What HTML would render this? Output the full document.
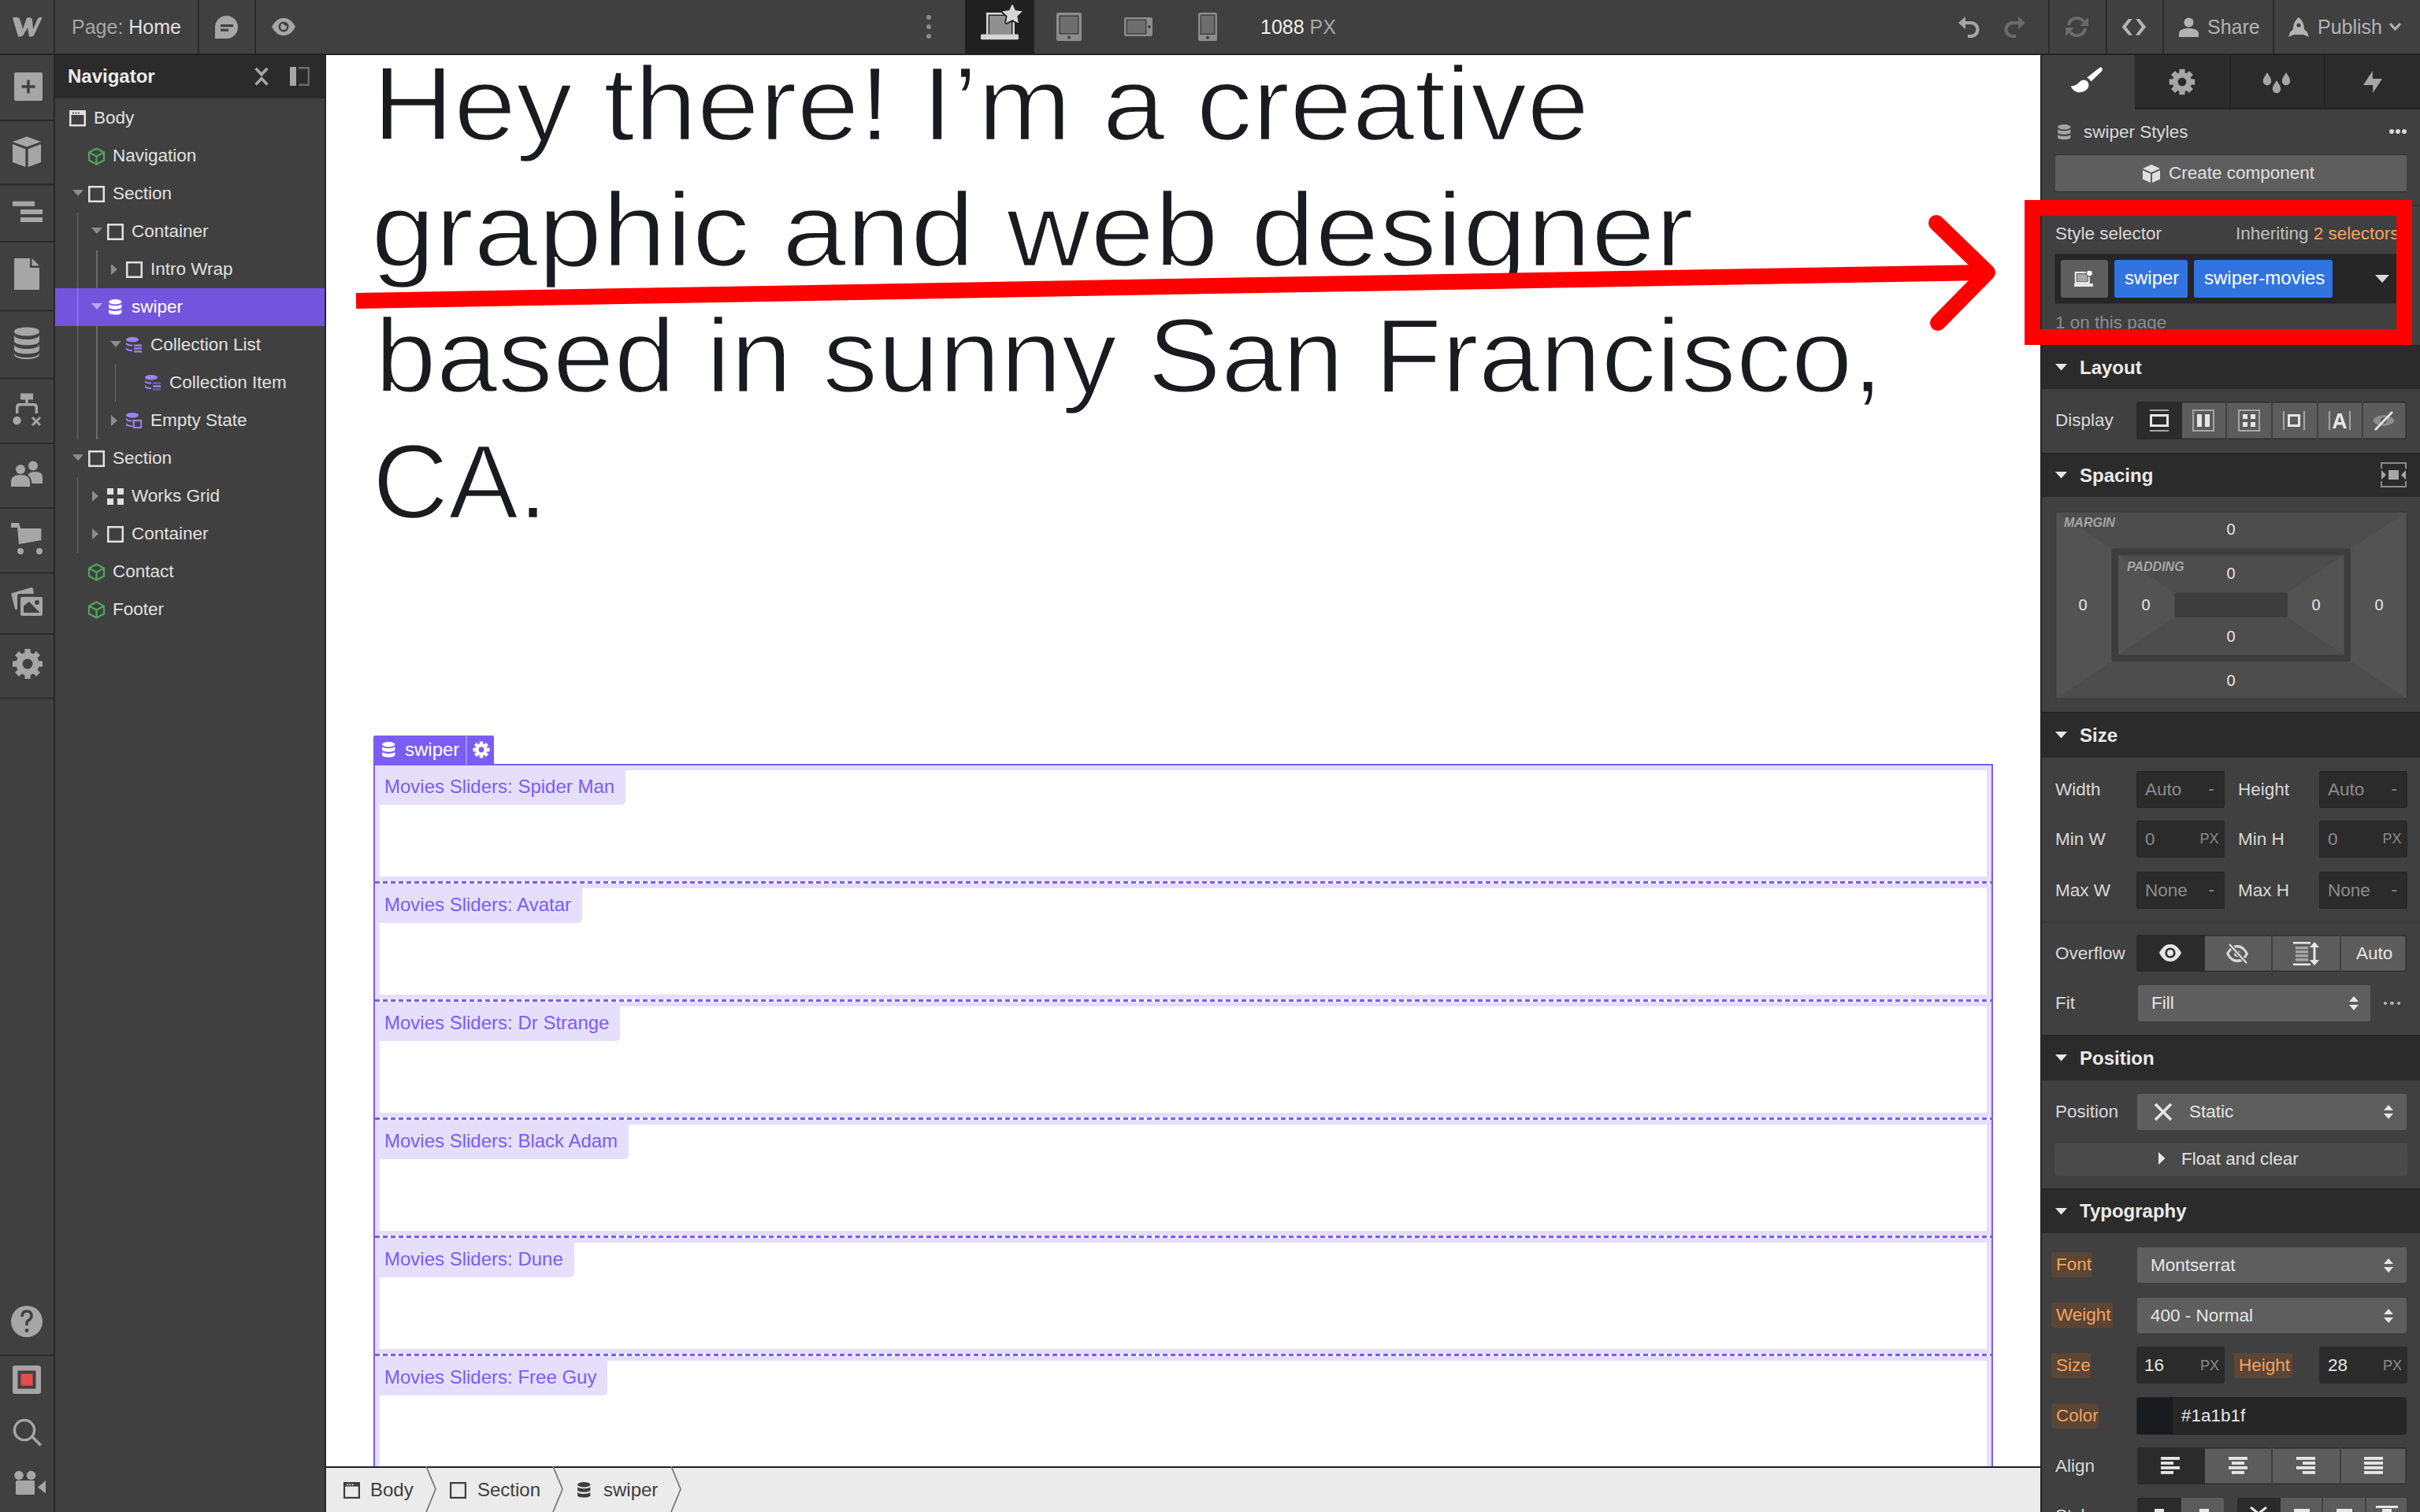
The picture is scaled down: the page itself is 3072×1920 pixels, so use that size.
<!DOCTYPE html>
<html><head><meta charset="utf-8">
<style>
*{box-sizing:border-box;margin:0;padding:0}
html,body{width:3072px;height:1920px;overflow:hidden;background:#404040;font-family:"Liberation Sans",sans-serif;}
.a{position:absolute}
#top{left:0;top:0;width:3072px;height:70px;background:#404040;border-bottom:2px solid #232323}
#iconbar{left:0;top:70px;width:70px;height:1850px;background:#404040;border-right:2px solid #262626}
#nav{left:70px;top:70px;width:344px;height:1850px;background:#404040;border-right:2px solid #262626}
#canvas{left:414px;top:70px;width:2176px;height:1792px;background:#fff;overflow:hidden}
#crumbs{left:414px;top:1862px;width:2176px;height:58px;background:#ebebeb;box-shadow:inset 0 2px 0 #1e1e1e}
#panel{left:2590px;top:70px;width:482px;height:1850px;background:#404040;box-shadow:inset 2px 0 0 #262626}
</style></head><body>
<div id="top" class="a">
 <!-- webflow logo -->
 <svg class="a" style="left:16px;top:21px" width="38" height="26" viewBox="0 0 38 26"><path fill="#a6a6a6" d="M0 1.5 C4 0 8 0.5 9.5 4 L13 16 L17.5 3 C18 1.5 19.5 0.8 21 1 C23 1.3 24.8 2.5 25 4.5 L26 16 L31.5 3.5 C32.5 1.5 35 0.5 37.5 1.5 L28 22 C27 25 24 26 21 25.5 L19 14 L14.5 22 C13.3 25 10 26 7 25.5 Z"/></svg>
 <div class="a" style="left:68px;top:0;width:2px;height:68px;background:#2a2a2a"></div>
 <div class="a" style="left:91px;top:17px;font-size:25px;line-height:34px;color:#a6a6a6;white-space:nowrap">Page: <span style="color:#e0e0e0">Home</span></div>
 <div class="a" style="left:251px;top:0;width:2px;height:68px;background:#2a2a2a"></div>
 <svg class="a" style="left:273px;top:20px" width="30" height="29" viewBox="0 0 30 29"><path fill="#a6a6a6" d="M0 29 V14.5 A14.5 14.5 0 1 1 14.5 29 Z"/><rect x="7" y="11" width="16" height="3.2" fill="#404040"/><rect x="7" y="16.6" width="10" height="3.2" fill="#404040"/></svg>
 <div class="a" style="left:323px;top:0;width:2px;height:68px;background:#2a2a2a"></div>
 <svg class="a" style="left:345px;top:23px" width="30" height="22" viewBox="0 0 30 22"><path fill="#a6a6a6" d="M0 11 C5 2 10 0 15 0 C20 0 25 2 30 11 C25 20 20 22 15 22 C10 22 5 20 0 11 Z"/><circle cx="15" cy="11" r="6.5" fill="#404040"/><circle cx="15" cy="11" r="4" fill="#a6a6a6"/><circle cx="17.6" cy="7.6" r="2.2" fill="#404040"/></svg>
 <!-- dots -->
 <div class="a" style="left:1176px;top:19px;width:6px;height:6px;border-radius:50%;background:#8c8c8c"></div>
 <div class="a" style="left:1176px;top:31px;width:6px;height:6px;border-radius:50%;background:#8c8c8c"></div>
 <div class="a" style="left:1176px;top:43px;width:6px;height:6px;border-radius:50%;background:#8c8c8c"></div>
 <div class="a" style="left:1225px;top:0;width:88px;height:68px;background:#212121"></div>
 <svg class="a" style="left:1244px;top:6px" width="56" height="46" viewBox="0 0 56 46"><rect x="8" y="10" width="36" height="29" fill="#d6d6d6"/><rect x="10.6" y="12.6" width="30.8" height="26" fill="#212121"/><rect x="12" y="14" width="28" height="23.6" fill="#8f8f8f"/><rect x="1" y="37.6" width="48" height="6.6" rx="1.5" fill="#d6d6d6"/><path d="M41.00 0.30 L44.53 7.65 L52.60 8.73 L46.71 14.35 L48.17 22.37 L41.00 18.50 L33.83 22.37 L35.29 14.35 L29.40 8.73 L37.47 7.65 Z" fill="#d6d6d6" stroke="#212121" stroke-width="5" stroke-linejoin="round" paint-order="stroke"/><path d="M41.00 0.30 L44.53 7.65 L52.60 8.73 L46.71 14.35 L48.17 22.37 L41.00 18.50 L33.83 22.37 L35.29 14.35 L29.40 8.73 L37.47 7.65 Z" fill="#d6d6d6" stroke="#d6d6d6" stroke-width="1.2" stroke-linejoin="round"/></svg>
 <svg class="a" style="left:1341px;top:16px" width="32" height="36" viewBox="0 0 32 36"><rect x="0" y="0" width="32" height="36" rx="2.5" fill="#8c8c8c"/><rect x="3.5" y="3.5" width="25" height="24" fill="#404040"/><rect x="5" y="5" width="22" height="21" fill="#6e6e6e"/><circle cx="16" cy="31.5" r="2" fill="#404040"/></svg>
 <svg class="a" style="left:1427px;top:22px" width="36" height="24" viewBox="0 0 36 24"><rect x="0" y="0" width="36" height="24" rx="2.5" fill="#8c8c8c"/><rect x="2.5" y="2.5" width="26" height="19" fill="#404040"/><rect x="4" y="4" width="23" height="16" fill="#6e6e6e"/><circle cx="31.9" cy="12" r="2" fill="#404040"/></svg>
 <svg class="a" style="left:1521px;top:16px" width="24" height="36" viewBox="0 0 24 36"><rect x="0" y="0" width="24" height="36" rx="2.5" fill="#8c8c8c"/><rect x="2.5" y="2.5" width="19" height="25.5" fill="#404040"/><rect x="4" y="4" width="16" height="22.5" fill="#6e6e6e"/><circle cx="12" cy="31.8" r="2" fill="#404040"/></svg>
 <div class="a" style="left:1600px;top:17px;font-size:25px;line-height:34px;color:#f0f0f0;white-space:nowrap">1088 <span style="color:#a6a6a6">PX</span></div>
 <!-- right -->
 <svg class="a" style="left:2485px;top:20px" width="30" height="28" viewBox="0 0 30 28"><path d="M4 9 H17 A8.5 8.5 0 0 1 17 26 H13" fill="none" stroke="#a6a6a6" stroke-width="4.2"/><path d="M1 9 L10 1 V17 Z" fill="#a6a6a6"/></svg>
 <svg class="a" style="left:2542px;top:20px" width="30" height="28" viewBox="0 0 30 28"><path d="M26 9 H13 A8.5 8.5 0 0 0 13 26 H17" fill="none" stroke="#6b6b6b" stroke-width="4.2"/><path d="M29 9 L20 1 V17 Z" fill="#6b6b6b"/></svg>
 <div class="a" style="left:2600px;top:0;width:2px;height:68px;background:#2a2a2a"></div>
 <svg class="a" style="left:2621px;top:21px" width="31" height="26" viewBox="0 0 31 26"><path d="M5 11 A10.5 10.5 0 0 1 24 6.5" fill="none" stroke="#6b6b6b" stroke-width="4"/><path d="M30 1 V12 H19 Z" fill="#6b6b6b"/><path d="M26 15 A10.5 10.5 0 0 1 7 19.5" fill="none" stroke="#6b6b6b" stroke-width="4"/><path d="M1 25 V14 H12 Z" fill="#6b6b6b"/></svg>
 <div class="a" style="left:2673px;top:0;width:2px;height:68px;background:#2a2a2a"></div>
 <svg class="a" style="left:2694px;top:24px" width="30" height="21" viewBox="2694 24 30 21"><path d="M2693.6 34.2 L2702.2 23.6 H2707 L2699 34.2 L2707 44.8 H2702.2 Z" fill="#b3b3b3"/><path d="M2724.2 34.2 L2715.6 23.6 H2710.8 L2718.8 34.2 L2710.8 44.8 H2715.6 Z" fill="#b3b3b3"/></svg>
 <div class="a" style="left:2745px;top:0;width:2px;height:68px;background:#2a2a2a"></div>
 <svg class="a" style="left:2766px;top:22px" width="25" height="25" viewBox="0 0 25 25"><circle cx="12.5" cy="6.5" r="6" fill="#b3b3b3"/><path d="M0 25 V21 C0 16 5 14 12.5 14 C20 14 25 16 25 21 V25 Z" fill="#b3b3b3"/></svg>
 <div class="a" style="left:2802px;top:17px;font-size:25px;line-height:34px;color:#b3b3b3">Share</div>
 <div class="a" style="left:2885px;top:0;width:2px;height:68px;background:#2a2a2a"></div>
 <svg class="a" style="left:2905px;top:22px" width="26" height="25" viewBox="0 0 26 25"><path d="M13 0 C18 4 20 9 20 15 L24 19 L26 25 L19 22 H7 L0 25 L2 19 L6 15 C6 9 8 4 13 0 Z" fill="#b3b3b3"/><circle cx="13" cy="10" r="2.6" fill="#404040"/></svg>
 <div class="a" style="left:2942px;top:17px;font-size:25px;line-height:34px;color:#b3b3b3">Publish</div>
 <svg class="a" style="left:3032px;top:28px" width="17" height="12" viewBox="0 0 17 12"><path d="M2 2 L8.5 9 L15 2" fill="none" stroke="#b3b3b3" stroke-width="3.2"/></svg>
</div>

<div id="iconbar" class="a">
 <svg class="a" style="left:0;top:0" width="68" height="1850" viewBox="0 70 68 1850">
  <g fill="#2a2a2a">
   <rect x="0" y="152" width="68" height="2"/><rect x="0" y="233.5" width="68" height="2"/><rect x="0" y="306" width="68" height="2"/>
   <rect x="0" y="393.5" width="68" height="2"/><rect x="0" y="479.5" width="68" height="2"/><rect x="0" y="562" width="68" height="2"/>
   <rect x="0" y="644" width="68" height="2"/><rect x="0" y="726.5" width="68" height="2"/><rect x="0" y="804" width="68" height="2"/>
   <rect x="0" y="885.5" width="68" height="2"/><rect x="0" y="1720" width="68" height="2"/>
  </g>
  <g fill="#a6a6a6">
   <!-- plus -->
   <rect x="18" y="92" width="36" height="36" rx="2"/>
   <!-- cube -->
   <path d="M34 173.5 L52 180 L34 186.5 L16 180 Z"/><path d="M16 183 L32.3 189.2 V212 L16 206 Z"/><path d="M52 183 L35.7 189.2 V212 L52 206 Z"/>
   <!-- navigator -->
   <rect x="16" y="255.6" width="28" height="6.2"/><rect x="26" y="266" width="28" height="6"/><rect x="26" y="276" width="28" height="6"/>
   <!-- page -->
   <path d="M18 328 H38 V340 H50 V368 H18 Z"/><path d="M40.5 328 L50 337.5 H40.5 Z"/>
   <!-- db -->
   <ellipse cx="34" cy="421" rx="16" ry="5.6"/>
   <path d="M18 425 C18 433 50 433 50 425 V433 C50 440 18 440 18 433 Z"/>
   <path d="M18 437 C18 445 50 445 50 437 V444 C50 451 18 451 18 444 Z"/>
   <path d="M18 448 C18 456 50 456 50 448 V450 C50 458 18 458 18 450 Z"/>
   <!-- logic -->
   <rect x="26" y="499.5" width="16" height="8"/><rect x="32.3" y="507" width="3.4" height="6"/>
   <path d="M20 525 V517 Q20 512 25 512 H43 Q48 512 48 517 V525 H44.6 V518 Q44.6 515.4 42 515.4 H26 Q23.4 515.4 23.4 518 V525 Z"/>
   <circle cx="21.5" cy="534" r="5.2"/>
   <path d="M42 529 L46 533 L50 529 L52 531 L48 535 L52 539 L50 541 L46 537 L42 541 L40 539 L44 535 L40 531 Z"/>
   <!-- users -->
   <circle cx="26" cy="596" r="6"/><circle cx="42" cy="591.5" r="6"/>
   <path d="M14 618 V612 Q14 603 26 603 Q38 603 38 612 V618 Z"/>
   <path d="M35 603 Q38 599 45 599 Q54 599 54 606 V614 H40.5 Q40 606 35 603 Z"/>
   <!-- cart -->
   <path d="M14 664 H24 L26 671 H52.4 V686 L24 691 L22 670 H14 Z"/>
   <circle cx="26" cy="700" r="4"/><circle cx="50" cy="700" r="4"/>
   <!-- assets -->
   <path d="M14.1 753.4 L39.5 746 Q41.5 745.6 42 747.5 L42.8 754 H25 Q22 754 22 757 V773.8 H19.1 Z"/>
   <rect x="26" y="758" width="28" height="24" rx="2"/>
   <!-- gear -->
   <g transform="translate(35,843)"><circle r="14.5"/><rect x="-3.6" y="-19" width="7.2" height="8" transform="rotate(0)"/><rect x="-3.6" y="-19" width="7.2" height="8" transform="rotate(45)"/><rect x="-3.6" y="-19" width="7.2" height="8" transform="rotate(90)"/><rect x="-3.6" y="-19" width="7.2" height="8" transform="rotate(135)"/><rect x="-3.6" y="-19" width="7.2" height="8" transform="rotate(180)"/><rect x="-3.6" y="-19" width="7.2" height="8" transform="rotate(225)"/><rect x="-3.6" y="-19" width="7.2" height="8" transform="rotate(270)"/><rect x="-3.6" y="-19" width="7.2" height="8" transform="rotate(315)"/></g>
   <!-- help -->
   <circle cx="34" cy="1678" r="20"/>
   <!-- record -->
   <rect x="16" y="1734" width="36" height="36" rx="3"/>
   <!-- search -->
   <circle cx="31" cy="1816" r="12.6" fill="none" stroke="#a6a6a6" stroke-width="3.4"/>
   <path d="M39 1825 L50.5 1836.5 L53 1834 L41.5 1822.5 Z"/>
   <!-- video -->
   <circle cx="24" cy="1873.5" r="5.8"/><circle cx="39.5" cy="1873.5" r="5.8"/>
   <rect x="20" y="1880" width="24" height="18" rx="1.5"/><path d="M48 1888.5 L58 1880 V1896.5 Z"/>
  </g>
  <path d="M27.5 110 H44.5 M36 101.5 V118.5" stroke="#404040" stroke-width="3.4"/>
  <g transform="translate(35,843)"><circle r="6.5" fill="#404040"/></g>
  <path d="M30 769.5 L36.9 764.1 L50.6 777.9 H30 Z" fill="#404040"/><circle cx="47" cy="765" r="2.9" fill="#404040"/>
  <path d="M28 1672 Q28 1665 34 1665 Q40 1665 40 1671 Q40 1675 35.5 1677 Q34 1678 34 1681 V1683" fill="none" stroke="#404040" stroke-width="3.6"/>
  <circle cx="34" cy="1689.5" r="2.4" fill="#404040"/>
  <rect x="22.5" y="1740.5" width="23" height="23" fill="#404040"/><rect x="26.5" y="1744.5" width="15" height="15" fill="#e74c4c"/>
 </svg>
</div>

<div id="nav" class="a">
<div class="a" style="left:0;top:0;width:342px;height:55px;background:#2b2b2b"></div>
<div class="a" style="left:16px;top:7px;font-size:24px;line-height:40px;font-weight:bold;color:#ebebeb">Navigator</div>
<svg class="a" style="left:253px;top:15px" width="18" height="24" viewBox="0 0 18 24"><path d="M1.6 1.8 L9 9.6 L16.4 1.8 M1.6 22.4 L9 14.6 L16.4 22.4" fill="none" stroke="#a6a6a6" stroke-width="3.6"/></svg>
<svg class="a" style="left:298px;top:15px" width="25" height="24" viewBox="0 0 25 24"><rect x="0" y="0" width="8" height="24" fill="#a6a6a6"/><path d="M11 1.2 H23.8 V22.8 H11" fill="none" stroke="#6b6b6b" stroke-width="2.4"/></svg>
<svg class="a" style="left:18px;top:70px" width="21" height="21"><rect x="1.25" y="1.25" width="18.5" height="18" fill="none" stroke="#e0e0e0" stroke-width="2.5"/><rect x="1" y="1" width="19" height="5" fill="#e0e0e0"/><rect x="4" y="2.6" width="1.8" height="1.8" fill="#404040"/><rect x="7.4" y="2.6" width="1.8" height="1.8" fill="#404040"/><rect x="10.8" y="2.6" width="1.8" height="1.8" fill="#404040"/></svg>
<div class="a" style="left:49px;top:56px;font-size:22.5px;line-height:48px;color:#e0e0e0;white-space:nowrap">Body</div>
<svg class="a" style="left:41px;top:117px" width="23" height="23" viewBox="0 0 23 23"><path d="M11.5 1.5 L21 6.5 V16.5 L11.5 21.5 L2 16.5 V6.5 Z M2 6.5 L11.5 11.5 L21 6.5 M11.5 11.5 V21.5" fill="none" stroke="#4ea65a" stroke-width="2.2" stroke-linejoin="round"/></svg>
<div class="a" style="left:73px;top:104px;font-size:22.5px;line-height:48px;color:#e0e0e0;white-space:nowrap">Navigation</div>
<svg class="a" style="left:22px;top:171px" width="14" height="9"><path d="M0 0 H14 L7 8 Z" fill="#8c8c8c"/></svg>
<svg class="a" style="left:42px;top:166px" width="21" height="21"><rect x="1.25" y="1.25" width="18.5" height="18.5" fill="none" stroke="#e0e0e0" stroke-width="2.5"/></svg>
<div class="a" style="left:73px;top:152px;font-size:22.5px;line-height:48px;color:#e0e0e0;white-space:nowrap">Section</div>
<svg class="a" style="left:46px;top:219px" width="14" height="9"><path d="M0 0 H14 L7 8 Z" fill="#8c8c8c"/></svg>
<svg class="a" style="left:66px;top:214px" width="21" height="21"><rect x="1.25" y="1.25" width="18.5" height="18.5" fill="none" stroke="#e0e0e0" stroke-width="2.5"/></svg>
<div class="a" style="left:97px;top:200px;font-size:22.5px;line-height:48px;color:#e0e0e0;white-space:nowrap">Container</div>
<svg class="a" style="left:71px;top:265px" width="9" height="14"><path d="M0 0 V14 L8 7 Z" fill="#8c8c8c"/></svg>
<svg class="a" style="left:90px;top:262px" width="21" height="21"><rect x="1.25" y="1.25" width="18.5" height="18.5" fill="none" stroke="#e0e0e0" stroke-width="2.5"/></svg>
<div class="a" style="left:121px;top:248px;font-size:22.5px;line-height:48px;color:#e0e0e0;white-space:nowrap">Intro Wrap</div>
<div class="a" style="left:0;top:296px;width:342px;height:48px;background:#7355dd"></div>
<svg class="a" style="left:46px;top:315px" width="14" height="9"><path d="M0 0 H14 L7 8 Z" fill="#b7a9ee"/></svg>
<svg class="a" style="left:68px;top:310px" width="17" height="21" viewBox="0 0 17 21"><ellipse cx="8.25" cy="3.2" rx="8.1" ry="3.2" fill="#ffffff"/><path d="M0.1 5.6 C0.1 9.2 16.4 9.2 16.4 5.6 V10 C16.4 13.6 0.1 13.6 0.1 10 Z" fill="#ffffff"/><path d="M0.1 12.3 C0.1 15.9 16.4 15.9 16.4 12.3 V16.8 C16.4 20.6 0.1 20.6 0.1 16.8 Z" fill="#ffffff"/></svg>
<div class="a" style="left:97px;top:296px;font-size:22.5px;line-height:48px;color:#ffffff;white-space:nowrap">swiper</div>
<svg class="a" style="left:70px;top:363px" width="14" height="9"><path d="M0 0 H14 L7 8 Z" fill="#8c8c8c"/></svg>
<svg class="a" style="left:90px;top:358px" width="20" height="20" viewBox="0 0 20 20"><ellipse cx="8" cy="3.2" rx="8" ry="3.2" fill="#9b83f5"/><path d="M0 5.8 C0 8.8 5 9.6 8 9.6 V11.6 C5 11.6 0 10.8 0 9 Z" fill="#9b83f5"/><path d="M0 12.2 C0 15.2 5 16 8 16 V18 C5 18 0 17.2 0 15.4 Z" fill="#9b83f5"/><rect x="10" y="9.5" width="10" height="2.4" fill="#9b83f5"/><rect x="10" y="13.3" width="10" height="2.4" fill="#9b83f5"/><rect x="10" y="17.2" width="10" height="2.4" fill="#9b83f5"/></svg>
<div class="a" style="left:121px;top:344px;font-size:22.5px;line-height:48px;color:#e0e0e0;white-space:nowrap">Collection List</div>
<svg class="a" style="left:114px;top:406px" width="20" height="20" viewBox="0 0 20 20"><ellipse cx="8" cy="3.2" rx="8" ry="3.2" fill="#9b83f5"/><path d="M0 5.8 C0 8.8 5 9.6 8 9.6 V11.6 C5 11.6 0 10.8 0 9 Z" fill="#9b83f5"/><path d="M0 12.2 C0 15.2 5 16 8 16 V18 C5 18 0 17.2 0 15.4 Z" fill="#9b83f5"/><rect x="10" y="9.5" width="10" height="2.4" fill="#6f5db5"/><rect x="10" y="13.3" width="10" height="2.4" fill="#9b83f5"/><rect x="10" y="17.2" width="10" height="2.4" fill="#6f5db5"/></svg>
<div class="a" style="left:145px;top:392px;font-size:22.5px;line-height:48px;color:#e0e0e0;white-space:nowrap">Collection Item</div>
<svg class="a" style="left:71px;top:457px" width="9" height="14"><path d="M0 0 V14 L8 7 Z" fill="#8c8c8c"/></svg>
<svg class="a" style="left:90px;top:454px" width="20" height="20" viewBox="0 0 20 20"><ellipse cx="8" cy="3.2" rx="8" ry="3.2" fill="#9b83f5"/><path d="M0 5.8 C0 8.8 5 9.6 8 9.6 V11.6 C5 11.6 0 10.8 0 9 Z" fill="#9b83f5"/><path d="M0 12.2 C0 15.2 5 16 8 16 V18 C5 18 0 17.2 0 15.4 Z" fill="#9b83f5"/><rect x="9.8" y="10" width="9.6" height="9" fill="none" stroke="#9b83f5" stroke-width="2.2"/></svg>
<div class="a" style="left:121px;top:440px;font-size:22.5px;line-height:48px;color:#e0e0e0;white-space:nowrap">Empty State</div>
<svg class="a" style="left:22px;top:507px" width="14" height="9"><path d="M0 0 H14 L7 8 Z" fill="#8c8c8c"/></svg>
<svg class="a" style="left:42px;top:502px" width="21" height="21"><rect x="1.25" y="1.25" width="18.5" height="18.5" fill="none" stroke="#e0e0e0" stroke-width="2.5"/></svg>
<div class="a" style="left:73px;top:488px;font-size:22.5px;line-height:48px;color:#e0e0e0;white-space:nowrap">Section</div>
<svg class="a" style="left:47px;top:553px" width="9" height="14"><path d="M0 0 V14 L8 7 Z" fill="#8c8c8c"/></svg>
<svg class="a" style="left:66px;top:550px" width="21" height="21"><rect x="0" y="0" width="8" height="8" fill="#e0e0e0"/><rect x="13" y="0" width="8" height="8" fill="#e0e0e0"/><rect x="0" y="13" width="8" height="8" fill="#e0e0e0"/><rect x="13" y="13" width="8" height="8" fill="#e0e0e0"/></svg>
<div class="a" style="left:97px;top:536px;font-size:22.5px;line-height:48px;color:#e0e0e0;white-space:nowrap">Works Grid</div>
<svg class="a" style="left:47px;top:601px" width="9" height="14"><path d="M0 0 V14 L8 7 Z" fill="#8c8c8c"/></svg>
<svg class="a" style="left:66px;top:598px" width="21" height="21"><rect x="1.25" y="1.25" width="18.5" height="18.5" fill="none" stroke="#e0e0e0" stroke-width="2.5"/></svg>
<div class="a" style="left:97px;top:584px;font-size:22.5px;line-height:48px;color:#e0e0e0;white-space:nowrap">Container</div>
<svg class="a" style="left:41px;top:645px" width="23" height="23" viewBox="0 0 23 23"><path d="M11.5 1.5 L21 6.5 V16.5 L11.5 21.5 L2 16.5 V6.5 Z M2 6.5 L11.5 11.5 L21 6.5 M11.5 11.5 V21.5" fill="none" stroke="#4ea65a" stroke-width="2.2" stroke-linejoin="round"/></svg>
<div class="a" style="left:73px;top:632px;font-size:22.5px;line-height:48px;color:#e0e0e0;white-space:nowrap">Contact</div>
<svg class="a" style="left:41px;top:693px" width="23" height="23" viewBox="0 0 23 23"><path d="M11.5 1.5 L21 6.5 V16.5 L11.5 21.5 L2 16.5 V6.5 Z M2 6.5 L11.5 11.5 L21 6.5 M11.5 11.5 V21.5" fill="none" stroke="#4ea65a" stroke-width="2.2" stroke-linejoin="round"/></svg>
<div class="a" style="left:73px;top:680px;font-size:22.5px;line-height:48px;color:#e0e0e0;white-space:nowrap">Footer</div>
<div class="a" style="left:27.75px;top:200px;width:1.5px;height:288px;background:#6b6b6b"></div>
<div class="a" style="left:52.25px;top:248px;width:1.5px;height:48px;background:#6b6b6b"></div>
<div class="a" style="left:52.25px;top:344px;width:1.5px;height:144px;background:#6b6b6b"></div>
<div class="a" style="left:75.75px;top:392px;width:1.5px;height:48px;background:#6b6b6b"></div>
<div class="a" style="left:27.75px;top:536px;width:1.5px;height:96px;background:#6b6b6b"></div>
<div class="a" style="left:27.75px;top:296px;width:1.5px;height:48px;background:#9c88e8"></div>
</div>
<div id="canvas" class="a">
<div class="a" style="left:59.2px;top:-5.0px;font-size:134px;line-height:134px;color:#1a1b1f;-webkit-text-stroke:2.4px #fff;white-space:nowrap;transform:scaleX(1.0635);transform-origin:0 0">Hey there! I’m a creative</div>
<div class="a" style="left:57.3px;top:155.0px;font-size:134px;line-height:134px;color:#1a1b1f;-webkit-text-stroke:2.4px #fff;white-space:nowrap;transform:scaleX(1.0942);transform-origin:0 0">graphic and web designer</div>
<div class="a" style="left:61.6px;top:315.0px;font-size:134px;line-height:134px;color:#1a1b1f;-webkit-text-stroke:2.4px #fff;white-space:nowrap;transform:scaleX(1.0448);transform-origin:0 0">based in sunny San Francisco,</div>
<div class="a" style="left:58.5px;top:475.0px;font-size:134px;line-height:134px;color:#1a1b1f;-webkit-text-stroke:2.4px #fff;white-space:nowrap;transform:scaleX(0.9945);transform-origin:0 0">CA.</div>
<svg class="a" style="left:0;top:0" width="2176" height="1792" viewBox="414 70 2176 1792"><path d="M452 382 L2522 346" stroke="#ff0000" stroke-width="20" fill="none"/><path d="M2458 283 L2523 346 L2460 410" stroke="#ff0000" stroke-width="20" fill="none" stroke-linecap="round" stroke-linejoin="round"/></svg>
<div class="a" style="left:60px;top:900px;width:2056px;height:902px;border:2px solid #7b5cf5;border-bottom:none"></div>
<div class="a" style="left:62px;top:902px;width:2052px;height:147px;box-shadow:inset 0 0 0 6px #e5dffc"></div>
<div class="a" style="left:68px;top:908px;height:43.5px;padding:0 14px 0 6px;background:#e5dffc;border-bottom-right-radius:5px;font-size:24px;line-height:41px;color:#7b5cf5;white-space:nowrap">Movies Sliders: Spider Man</div>
<div class="a" style="left:62px;top:1052px;width:2052px;height:147px;box-shadow:inset 0 0 0 6px #e5dffc"></div>
<div class="a" style="left:68px;top:1058px;height:43.5px;padding:0 14px 0 6px;background:#e5dffc;border-bottom-right-radius:5px;font-size:24px;line-height:41px;color:#7b5cf5;white-space:nowrap">Movies Sliders: Avatar</div>
<div class="a" style="left:62px;top:1049px;width:2052px;height:3px;background:repeating-linear-gradient(90deg,#7b5cf5 0 6px,transparent 6px 10px)"></div>
<div class="a" style="left:62px;top:1202px;width:2052px;height:147px;box-shadow:inset 0 0 0 6px #e5dffc"></div>
<div class="a" style="left:68px;top:1208px;height:43.5px;padding:0 14px 0 6px;background:#e5dffc;border-bottom-right-radius:5px;font-size:24px;line-height:41px;color:#7b5cf5;white-space:nowrap">Movies Sliders: Dr Strange</div>
<div class="a" style="left:62px;top:1199px;width:2052px;height:3px;background:repeating-linear-gradient(90deg,#7b5cf5 0 6px,transparent 6px 10px)"></div>
<div class="a" style="left:62px;top:1352px;width:2052px;height:147px;box-shadow:inset 0 0 0 6px #e5dffc"></div>
<div class="a" style="left:68px;top:1358px;height:43.5px;padding:0 14px 0 6px;background:#e5dffc;border-bottom-right-radius:5px;font-size:24px;line-height:41px;color:#7b5cf5;white-space:nowrap">Movies Sliders: Black Adam</div>
<div class="a" style="left:62px;top:1349px;width:2052px;height:3px;background:repeating-linear-gradient(90deg,#7b5cf5 0 6px,transparent 6px 10px)"></div>
<div class="a" style="left:62px;top:1502px;width:2052px;height:147px;box-shadow:inset 0 0 0 6px #e5dffc"></div>
<div class="a" style="left:68px;top:1508px;height:43.5px;padding:0 14px 0 6px;background:#e5dffc;border-bottom-right-radius:5px;font-size:24px;line-height:41px;color:#7b5cf5;white-space:nowrap">Movies Sliders: Dune</div>
<div class="a" style="left:62px;top:1499px;width:2052px;height:3px;background:repeating-linear-gradient(90deg,#7b5cf5 0 6px,transparent 6px 10px)"></div>
<div class="a" style="left:62px;top:1652px;width:2052px;height:147px;box-shadow:inset 0 0 0 6px #e5dffc"></div>
<div class="a" style="left:68px;top:1658px;height:43.5px;padding:0 14px 0 6px;background:#e5dffc;border-bottom-right-radius:5px;font-size:24px;line-height:41px;color:#7b5cf5;white-space:nowrap">Movies Sliders: Free Guy</div>
<div class="a" style="left:62px;top:1649px;width:2052px;height:3px;background:repeating-linear-gradient(90deg,#7b5cf5 0 6px,transparent 6px 10px)"></div>
<div class="a" style="left:60px;top:864px;width:153px;height:37px;background:#7b5cf5;border-radius:2px 2px 0 0"></div>
<div class="a" style="left:177px;top:864px;width:1.6px;height:37px;background:#a593f7"></div>
<svg class="a" style="left:71px;top:872px" width="17" height="21" viewBox="0 0 17 21"><ellipse cx="8.25" cy="3.2" rx="8.1" ry="3.2" fill="#fff"/><path d="M0.1 5.6 C0.1 9.2 16.4 9.2 16.4 5.6 V10 C16.4 13.6 0.1 13.6 0.1 10 Z" fill="#fff"/><path d="M0.1 12.3 C0.1 15.9 16.4 15.9 16.4 12.3 V16.8 C16.4 20.6 0.1 20.6 0.1 16.8 Z" fill="#fff"/></svg>
<div class="a" style="left:100px;top:864px;font-size:24px;line-height:36px;color:#fff">swiper</div>
<svg class="a" style="left:186px;top:871px" width="22" height="22" viewBox="-11 -11 22 22"><g fill="#fff"><circle r="7.6"/><rect x="-2.3" y="-10.5" width="4.6" height="5" transform="rotate(0)"/><rect x="-2.3" y="-10.5" width="4.6" height="5" transform="rotate(45)"/><rect x="-2.3" y="-10.5" width="4.6" height="5" transform="rotate(90)"/><rect x="-2.3" y="-10.5" width="4.6" height="5" transform="rotate(135)"/><rect x="-2.3" y="-10.5" width="4.6" height="5" transform="rotate(180)"/><rect x="-2.3" y="-10.5" width="4.6" height="5" transform="rotate(225)"/><rect x="-2.3" y="-10.5" width="4.6" height="5" transform="rotate(270)"/><rect x="-2.3" y="-10.5" width="4.6" height="5" transform="rotate(315)"/></g><circle r="3.4" fill="#7b5cf5"/></svg>
</div>
<div id="crumbs" class="a">
<svg class="a" style="left:22px;top:20px" width="21" height="21"><rect x="1.1" y="1.1" width="18.8" height="18.8" fill="none" stroke="#3d3d3d" stroke-width="2.2"/><rect x="1" y="1" width="19" height="4.6" fill="#3d3d3d"/><rect x="4" y="2.4" width="1.8" height="1.8" fill="#ebebeb"/><rect x="7.4" y="2.4" width="1.8" height="1.8" fill="#ebebeb"/><rect x="10.8" y="2.4" width="1.8" height="1.8" fill="#ebebeb"/></svg>
<div class="a" style="left:56px;top:2px;font-size:24px;line-height:56px;color:#3d3d3d">Body</div>
<svg class="a" style="left:126px;top:0" width="16" height="58" viewBox="0 0 16 58"><path d="M1 0 L13 29 L1 58" fill="none" stroke="#7a7a7a" stroke-width="1.8"/></svg>
<svg class="a" style="left:157px;top:20px" width="21" height="21"><rect x="1.1" y="1.1" width="18.8" height="18.8" fill="none" stroke="#3d3d3d" stroke-width="2.2"/></svg>
<div class="a" style="left:192px;top:2px;font-size:24px;line-height:56px;color:#3d3d3d">Section</div>
<svg class="a" style="left:287px;top:0" width="16" height="58" viewBox="0 0 16 58"><path d="M1 0 L13 29 L1 58" fill="none" stroke="#7a7a7a" stroke-width="1.8"/></svg>
<svg class="a" style="left:319px;top:20px" width="17" height="21" viewBox="0 0 17 21"><ellipse cx="8.25" cy="3.2" rx="8.1" ry="3.2" fill="#3d3d3d"/><path d="M0.1 5.6 C0.1 9.2 16.4 9.2 16.4 5.6 V10 C16.4 13.6 0.1 13.6 0.1 10 Z" fill="#3d3d3d"/><path d="M0.1 12.3 C0.1 15.9 16.4 15.9 16.4 12.3 V16.8 C16.4 20.6 0.1 20.6 0.1 16.8 Z" fill="#3d3d3d"/></svg>
<div class="a" style="left:352px;top:2px;font-size:24px;line-height:56px;color:#3d3d3d">swiper</div>
<svg class="a" style="left:437px;top:0" width="16" height="58" viewBox="0 0 16 58"><path d="M1 0 L13 29 L1 58" fill="none" stroke="#7a7a7a" stroke-width="1.8"/></svg>
</div>
<div id="panel" class="a">
<div class="a" style="left:120.0px;top:0.0px;width:362.0px;height:69.0px;background:#2b2b2b;border-bottom:2px solid #232323"></div>
<div class="a" style="left:240.0px;top:0.0px;width:2.0px;height:68.0px;background:#232323"></div>
<div class="a" style="left:360.0px;top:0.0px;width:2.0px;height:68.0px;background:#232323"></div>
<svg class="a" style="left:36.0px;top:14.0px" width="46" height="36" viewBox="0 0 46 36"><path d="M23.3 14.4 L38.5 2.4 Q41 0.6 42.6 2.8 Q43.6 4.6 42 6.6 L28.4 19.6 Q26.8 16.2 23.3 14.4 Z" fill="#fff"/><path d="M2.6 25.4 C6.5 25.8 10.5 24 13.4 20.6 C15.2 18.6 17.2 17.6 19.4 17.6 C23.4 17.8 25.8 21 25.4 24.8 C24.8 29.8 20 33.2 14 33.2 C8.6 33.2 4.6 29.8 2.6 25.4 Z" fill="#fff"/></svg>
<svg class="a" style="left:162.0px;top:16.0px" width="36" height="36" viewBox="0 0 36 36"><g transform="translate(18,18)" fill="#a6a6a6"><circle r="12.2"/><rect x="-3.6" y="-16.2" width="7.2" height="7" transform="rotate(0)"/><rect x="-3.6" y="-16.2" width="7.2" height="7" transform="rotate(45)"/><rect x="-3.6" y="-16.2" width="7.2" height="7" transform="rotate(90)"/><rect x="-3.6" y="-16.2" width="7.2" height="7" transform="rotate(135)"/><rect x="-3.6" y="-16.2" width="7.2" height="7" transform="rotate(180)"/><rect x="-3.6" y="-16.2" width="7.2" height="7" transform="rotate(225)"/><rect x="-3.6" y="-16.2" width="7.2" height="7" transform="rotate(270)"/><rect x="-3.6" y="-16.2" width="7.2" height="7" transform="rotate(315)"/></g><circle cx="18" cy="18" r="5.4" fill="#2b2b2b"/></svg>
<svg class="a" style="left:282.0px;top:20.0px" width="36" height="30" viewBox="0 0 36 30"><path d="M6.0 2.0 C8.0 5.5 11.2 9.0 11.2 13.0 A5.2 5.2 0 0 1 0.8 13.0 C0.8 9.0 4.0 5.5 6.0 2.0 Z" fill="#a6a6a6"/><path d="M18.0 12.0 C20.0 15.5 23.2 19.0 23.2 23.0 A5.2 5.2 0 0 1 12.8 23.0 C12.8 19.0 16.0 15.5 18.0 12.0 Z" fill="#a6a6a6"/><path d="M30.0 2.0 C32.0 5.5 35.2 9.0 35.2 13.0 A5.2 5.2 0 0 1 24.8 13.0 C24.8 9.0 28.0 5.5 30.0 2.0 Z" fill="#a6a6a6"/></svg>
<svg class="a" style="left:408.0px;top:18.0px" width="28" height="32" viewBox="0 0 28 32"><path d="M13.8 2 V12 H26 L14.2 30 V20 H2 Z" fill="#a6a6a6"/></svg>
<svg class="a" style="left:22.0px;top:88.0px" width="17" height="20" viewBox="0 0 17 20"><ellipse cx="8.25" cy="3.2" rx="8.1" ry="3.2" fill="#a6a6a6"/><path d="M0.1 5.6 C0.1 9.2 16.4 9.2 16.4 5.6 V10 C16.4 13.6 0.1 13.6 0.1 10 Z" fill="#a6a6a6"/><path d="M0.1 12.3 C0.1 15.9 16.4 15.9 16.4 12.3 V16.5 C16.4 20.2 0.1 20.2 0.1 16.5 Z" fill="#a6a6a6"/></svg>
<div class="a" style="left:55.0px;top:80.0px;font-size:22.5px;line-height:36.0px;color:#d9d9d9;white-space:nowrap;">swiper Styles</div>
<div class="a" style="left:443.0px;top:94.0px;width:6.0px;height:6.0px;background:#d9d9d9;border-radius:50%"></div>
<div class="a" style="left:451.0px;top:94.0px;width:6.0px;height:6.0px;background:#d9d9d9;border-radius:50%"></div>
<div class="a" style="left:459.0px;top:94.0px;width:6.0px;height:6.0px;background:#d9d9d9;border-radius:50%"></div>
<div class="a" style="left:19.0px;top:127.0px;width:446.0px;height:46.0px;background:#5e5e5e;border-radius:3px;box-shadow:0 -1px 0 #333, 0 1px 0 #2e2e2e"></div>
<svg class="a" style="left:130.0px;top:139.0px" width="22" height="23" viewBox="0 0 22 23"><path d="M11 0 L22 5 L11 10 L0 5 Z" fill="#e0e0e0"/><path d="M0 7.2 L10 11.8 V23 L0 18.4 Z" fill="#e0e0e0"/><path d="M22 7.2 L12 11.8 V23 L22 18.4 Z" fill="#e0e0e0"/></svg>
<div class="a" style="left:163.0px;top:132.0px;font-size:22.5px;line-height:36.0px;color:#e0e0e0;white-space:nowrap;">Create component</div>
<div class="a" style="left:2.0px;top:190.0px;width:480.0px;height:2.0px;background:#353535"></div>
<div class="a" style="left:19.0px;top:209.0px;font-size:22.5px;line-height:36.0px;color:#d9d9d9;white-space:nowrap;">Style selector</div>
<div class="a" style="left:248.0px;top:209.0px;font-size:22.5px;line-height:36.0px;color:#bfbfbf;white-space:nowrap;">Inheriting <span style="color:#f3a35f">2 selectors</span></div>
<div class="a" style="left:18.0px;top:252.0px;width:447.0px;height:64.0px;background:#262626;border-radius:3px;box-shadow:inset 0 0 0 1px #333"></div>
<div class="a" style="left:26.0px;top:260.0px;width:60.0px;height:48.0px;background:#5e5e5e;border-radius:3px"></div>
<svg class="a" style="left:43.0px;top:272.0px" width="25" height="23" viewBox="0 0 25 23"><rect x="1.8" y="4" width="17" height="13" fill="none" stroke="#e6e6e6" stroke-width="2.2"/><rect x="4" y="6.2" width="12.6" height="9" fill="#a6a6a6"/><rect x="0" y="18" width="24" height="4" fill="#e6e6e6"/><circle cx="19.5" cy="5" r="4.6" fill="#5e5e5e"/><circle cx="19.5" cy="5" r="3.3" fill="#fff"/></svg>
<div class="a" style="left:94.0px;top:260.0px;width:93.0px;height:48.0px;background:#3174e0;border-radius:3px"></div>
<div class="a" style="left:107.0px;top:263.8px;font-size:24px;line-height:38.4px;color:#fff;white-space:nowrap;">swiper</div>
<div class="a" style="left:195.0px;top:260.0px;width:176.0px;height:48.0px;background:#3174e0;border-radius:3px"></div>
<div class="a" style="left:208.0px;top:263.8px;font-size:24px;line-height:38.4px;color:#fff;white-space:nowrap;">swiper-movies</div>
<svg class="a" style="left:425.0px;top:279.0px" width="18" height="10" viewBox="0 0 18 10"><path d="M0 0 H18 L9 10 Z" fill="#d9d9d9"/></svg>
<div class="a" style="left:19.0px;top:322.0px;font-size:22.5px;line-height:36.0px;color:#8c8c8c;white-space:nowrap;">1 on this page</div>
<div class="a" style="left:2.0px;top:368.0px;width:480.0px;height:56.0px;background:#2b2b2b;border-top:2px solid #262626"></div>
<svg class="a" style="left:19.0px;top:392.0px" width="15" height="9" viewBox="0 0 15 9"><path d="M0 0 H15 L7.5 8.5 Z" fill="#e6e6e6"/></svg>
<div class="a" style="left:50.0px;top:377.8px;font-size:24px;line-height:38.4px;color:#ebebeb;white-space:nowrap;font-weight:bold">Layout</div>
<div class="a" style="left:19.0px;top:446.0px;font-size:22.5px;line-height:36.0px;color:#d9d9d9;white-space:nowrap;">Display</div>
<div class="a" style="left:122.0px;top:440.0px;width:343.0px;height:48.0px;background:#5c5c5c;border-radius:3px;box-shadow:inset 0 0 0 1.5px #2e2e2e"></div>
<div class="a" style="left:122.0px;top:440.0px;width:58.0px;height:48.0px;background:#2b2b2b;border-radius:3px 0 0 3px"></div>
<div class="a" style="left:235.0px;top:440.0px;width:2.0px;height:48.0px;background:#404040"></div>
<div class="a" style="left:293.0px;top:440.0px;width:2.0px;height:48.0px;background:#404040"></div>
<div class="a" style="left:351.0px;top:440.0px;width:2.0px;height:48.0px;background:#404040"></div>
<div class="a" style="left:408.0px;top:440.0px;width:2.0px;height:48.0px;background:#404040"></div>
<svg class="a" style="left:139.0px;top:450.0px" width="24" height="28" viewBox="0 0 24 28"><rect x="0" y="0" width="24" height="2" fill="#a6a6a6"/><rect x="1.5" y="7.5" width="21" height="13" fill="none" stroke="#e6e6e6" stroke-width="3"/><rect x="0" y="26" width="24" height="2" fill="#a6a6a6"/></svg>
<svg class="a" style="left:193.0px;top:450.0px" width="28" height="28" viewBox="0 0 28 28"><rect x="1" y="1" width="26" height="26" fill="none" stroke="#a6a6a6" stroke-width="2"/><rect x="6" y="6" width="6" height="16" fill="#e6e6e6"/><rect x="16" y="6" width="6" height="16" fill="#e6e6e6"/></svg>
<svg class="a" style="left:251.0px;top:450.0px" width="28" height="28" viewBox="0 0 28 28"><rect x="1" y="1" width="26" height="26" fill="none" stroke="#a6a6a6" stroke-width="2"/><rect x="6" y="6" width="6" height="6" fill="#e6e6e6"/><rect x="16" y="6" width="6" height="6" fill="#e6e6e6"/><rect x="6" y="16" width="6" height="6" fill="#e6e6e6"/><rect x="16" y="16" width="6" height="6" fill="#e6e6e6"/></svg>
<svg class="a" style="left:308.0px;top:452.0px" width="28" height="24" viewBox="0 0 28 24"><rect x="0" y="0" width="2" height="24" fill="#a6a6a6"/><rect x="26" y="0" width="2" height="24" fill="#a6a6a6"/><rect x="7.5" y="5.5" width="13" height="13" fill="none" stroke="#e6e6e6" stroke-width="3"/></svg>
<svg class="a" style="left:366.0px;top:452.0px" width="28" height="24" viewBox="0 0 28 24"><rect x="0" y="0" width="2" height="24" fill="#a6a6a6"/><rect x="26" y="0" width="2" height="24" fill="#a6a6a6"/><path d="M5 22 L11.5 3 H16.5 L23 22 H19 L17.5 17.5 H10.5 L9 22 Z M11.6 14 H16.4 L14 6.5 Z" fill="#e6e6e6" fill-rule="evenodd"/></svg>
<svg class="a" style="left:422.0px;top:451.0px" width="28" height="26" viewBox="0 0 28 26"><path d="M0 13 C5 4 23 4 28 13 C23 22 5 22 0 13 Z" fill="#8c8c8c"/><circle cx="14" cy="13" r="4" fill="#5c5c5c"/><path d="M3 25 L25 2" stroke="#e6e6e6" stroke-width="2.6"/></svg>
<div class="a" style="left:2.0px;top:505.0px;width:480.0px;height:56.0px;background:#2b2b2b;border-top:2px solid #262626"></div>
<svg class="a" style="left:19.0px;top:529.0px" width="15" height="9" viewBox="0 0 15 9"><path d="M0 0 H15 L7.5 8.5 Z" fill="#e6e6e6"/></svg>
<div class="a" style="left:50.0px;top:514.8px;font-size:24px;line-height:38.4px;color:#ebebeb;white-space:nowrap;font-weight:bold">Spacing</div>
<svg class="a" style="left:432.0px;top:517.0px" width="33" height="32" viewBox="0 0 33 32"><path d="M1 8 V1 H32 V8 M1 24 V31 H32 V24" fill="none" stroke="#8c8c8c" stroke-width="2"/><rect x="10" y="10" width="13" height="12" fill="#a6a6a6"/><path d="M1 10 L7 16 L1 22 Z M32 10 L26 16 L32 22 Z" fill="#a6a6a6"/></svg>
<svg class="a" style="left:19.0px;top:579.0px" width="447" height="239" viewBox="0 0 447 239"><rect x="0.75" y="0.75" width="445.5" height="237.5" rx="3" fill="#4d4d4d" stroke="#3a3a3a" stroke-width="1.5"/>
<path d="M1.5 1.5 L71.5 47.5 V191 L1.5 237.5 Z" fill="#535353"/>
<path d="M445.5 1.5 L375 47.5 V191 L445.5 237.5 Z" fill="#535353"/>
<rect x="71.5" y="47.5" width="303.5" height="143.5" rx="3" fill="#3d3d3d"/>
<rect x="80" y="56" width="286.5" height="126.5" rx="2" fill="#4d4d4d"/>
<path d="M80 56 L151.5 103.5 V135 L80 182.5 Z" fill="#535353"/>
<path d="M366.5 56 L295 103.5 V135 L366.5 182.5 Z" fill="#535353"/>
<rect x="151.5" y="103.5" width="143.5" height="31.5" rx="3" fill="#3d3d3d"/></svg>
<div class="a" style="left:30.0px;top:581.2px;font-size:16px;line-height:25.6px;color:#a6a6a6;white-space:nowrap;font-weight:bold;font-style:italic">MARGIN</div>
<div class="a" style="left:110.0px;top:637.2px;font-size:16px;line-height:25.6px;color:#a6a6a6;white-space:nowrap;font-weight:bold;font-style:italic">PADDING</div>
<div class="a" style="left:222.0px;top:587.0px;width:40px;text-align:center;font-size:20px;line-height:30px;color:#e6e6e6">0</div>
<div class="a" style="left:222.0px;top:643.0px;width:40px;text-align:center;font-size:20px;line-height:30px;color:#e6e6e6">0</div>
<div class="a" style="left:34.0px;top:683.0px;width:40px;text-align:center;font-size:20px;line-height:30px;color:#e6e6e6">0</div>
<div class="a" style="left:114.0px;top:683.0px;width:40px;text-align:center;font-size:20px;line-height:30px;color:#e6e6e6">0</div>
<div class="a" style="left:330.0px;top:683.0px;width:40px;text-align:center;font-size:20px;line-height:30px;color:#e6e6e6">0</div>
<div class="a" style="left:410.0px;top:683.0px;width:40px;text-align:center;font-size:20px;line-height:30px;color:#e6e6e6">0</div>
<div class="a" style="left:222.0px;top:723.0px;width:40px;text-align:center;font-size:20px;line-height:30px;color:#e6e6e6">0</div>
<div class="a" style="left:222.0px;top:779.0px;width:40px;text-align:center;font-size:20px;line-height:30px;color:#e6e6e6">0</div>
<div class="a" style="left:2.0px;top:834.0px;width:480.0px;height:58.0px;background:#2b2b2b;border-top:2px solid #262626"></div>
<svg class="a" style="left:19.0px;top:859.0px" width="15" height="9" viewBox="0 0 15 9"><path d="M0 0 H15 L7.5 8.5 Z" fill="#e6e6e6"/></svg>
<div class="a" style="left:50.0px;top:844.8px;font-size:24px;line-height:38.4px;color:#ebebeb;white-space:nowrap;font-weight:bold">Size</div>
<div class="a" style="left:19.0px;top:914.5px;font-size:22.5px;line-height:36.0px;color:#d9d9d9;white-space:nowrap;">Width</div>
<div class="a" style="left:122.0px;top:909.0px;width:111.5px;height:47.0px;background:#2b2b2b;border-radius:3px;box-shadow:inset 0 0 0 1px #262626"></div>
<div class="a" style="left:133.0px;top:914.5px;font-size:22.5px;line-height:36.0px;color:#8c8c8c;white-space:nowrap;">Auto</div>
<div class="a" style="left:213.5px;top:913.5px;font-size:22.5px;line-height:36.0px;color:#8c8c8c;white-space:nowrap;">-</div>
<div class="a" style="left:251.0px;top:914.5px;font-size:22.5px;line-height:36.0px;color:#d9d9d9;white-space:nowrap;">Height</div>
<div class="a" style="left:354.0px;top:909.0px;width:111.5px;height:47.0px;background:#2b2b2b;border-radius:3px;box-shadow:inset 0 0 0 1px #262626"></div>
<div class="a" style="left:365.0px;top:914.5px;font-size:22.5px;line-height:36.0px;color:#8c8c8c;white-space:nowrap;">Auto</div>
<div class="a" style="left:445.5px;top:913.5px;font-size:22.5px;line-height:36.0px;color:#8c8c8c;white-space:nowrap;">-</div>
<div class="a" style="left:19.0px;top:977.5px;font-size:22.5px;line-height:36.0px;color:#d9d9d9;white-space:nowrap;">Min W</div>
<div class="a" style="left:122.0px;top:972.0px;width:111.5px;height:47.0px;background:#2b2b2b;border-radius:3px;box-shadow:inset 0 0 0 1px #262626"></div>
<div class="a" style="left:133.0px;top:977.5px;font-size:22.5px;line-height:36.0px;color:#8c8c8c;white-space:nowrap;">0</div>
<div class="a" style="left:202.5px;top:981.1px;font-size:18px;line-height:28.8px;color:#8c8c8c;white-space:nowrap;">PX</div>
<div class="a" style="left:251.0px;top:977.5px;font-size:22.5px;line-height:36.0px;color:#d9d9d9;white-space:nowrap;">Min H</div>
<div class="a" style="left:354.0px;top:972.0px;width:111.5px;height:47.0px;background:#2b2b2b;border-radius:3px;box-shadow:inset 0 0 0 1px #262626"></div>
<div class="a" style="left:365.0px;top:977.5px;font-size:22.5px;line-height:36.0px;color:#8c8c8c;white-space:nowrap;">0</div>
<div class="a" style="left:434.5px;top:981.1px;font-size:18px;line-height:28.8px;color:#8c8c8c;white-space:nowrap;">PX</div>
<div class="a" style="left:19.0px;top:1042.5px;font-size:22.5px;line-height:36.0px;color:#d9d9d9;white-space:nowrap;">Max W</div>
<div class="a" style="left:122.0px;top:1037.0px;width:111.5px;height:47.0px;background:#2b2b2b;border-radius:3px;box-shadow:inset 0 0 0 1px #262626"></div>
<div class="a" style="left:133.0px;top:1042.5px;font-size:22.5px;line-height:36.0px;color:#8c8c8c;white-space:nowrap;">None</div>
<div class="a" style="left:213.5px;top:1041.5px;font-size:22.5px;line-height:36.0px;color:#8c8c8c;white-space:nowrap;">-</div>
<div class="a" style="left:251.0px;top:1042.5px;font-size:22.5px;line-height:36.0px;color:#d9d9d9;white-space:nowrap;">Max H</div>
<div class="a" style="left:354.0px;top:1037.0px;width:111.5px;height:47.0px;background:#2b2b2b;border-radius:3px;box-shadow:inset 0 0 0 1px #262626"></div>
<div class="a" style="left:365.0px;top:1042.5px;font-size:22.5px;line-height:36.0px;color:#8c8c8c;white-space:nowrap;">None</div>
<div class="a" style="left:445.5px;top:1041.5px;font-size:22.5px;line-height:36.0px;color:#8c8c8c;white-space:nowrap;">-</div>
<div class="a" style="left:2.0px;top:1100.0px;width:480.0px;height:2.0px;background:#383838"></div>
<div class="a" style="left:19.0px;top:1123.0px;font-size:22.5px;line-height:36.0px;color:#d9d9d9;white-space:nowrap;">Overflow</div>
<div class="a" style="left:122.0px;top:1117.0px;width:343.0px;height:47.0px;background:#5c5c5c;border-radius:3px;box-shadow:inset 0 0 0 1.5px #2e2e2e"></div>
<div class="a" style="left:122.0px;top:1117.0px;width:86.5px;height:47.0px;background:#2b2b2b;border-radius:3px 0 0 3px"></div>
<div class="a" style="left:293.0px;top:1117.0px;width:2.0px;height:47.0px;background:#404040"></div>
<div class="a" style="left:380.0px;top:1117.0px;width:2.0px;height:47.0px;background:#404040"></div>
<svg class="a" style="left:151.0px;top:1129.0px" width="28" height="22" viewBox="0 0 28 22"><path d="M0 11 C4 3 9 0 14 0 C19 0 24 3 28 11 C24 19 19 22 14 22 C9 22 4 19 0 11 Z" fill="#e6e6e6"/><circle cx="14" cy="11" r="6.6" fill="#2b2b2b"/><circle cx="14" cy="11" r="4" fill="#e6e6e6"/></svg>
<svg class="a" style="left:236.0px;top:1128.0px" width="28" height="26" viewBox="0 0 28 26"><path d="M0 13 C4 5 9 2 14 2 C19 2 24 5 28 13 C24 21 19 24 14 24 C9 24 4 21 0 13 Z" fill="#d9d9d9"/><path d="M3.4 13 C6.5 7.5 10 5.6 14 5.6 C18 5.6 21.5 7.5 24.6 13 C21.5 18.5 18 20.4 14 20.4 C10 20.4 6.5 18.5 3.4 13 Z" fill="#5c5c5c"/><circle cx="14" cy="13" r="4" fill="#d9d9d9"/><path d="M4 1 L26 25" stroke="#5c5c5c" stroke-width="5"/><path d="M4 1 L26 25" stroke="#d9d9d9" stroke-width="2.4"/></svg>
<svg class="a" style="left:321.0px;top:1126.0px" width="33" height="30" viewBox="0 0 33 30"><rect x="0" y="0" width="22" height="2.6" fill="#e6e6e6"/><rect x="0" y="27.4" width="22" height="2.6" fill="#e6e6e6"/><rect x="3" y="6" width="16" height="3.4" fill="#a6a6a6"/><rect x="3" y="11" width="16" height="3.4" fill="#a6a6a6"/><rect x="3" y="16" width="16" height="3.4" fill="#a6a6a6"/><rect x="3" y="21" width="16" height="3.4" fill="#a6a6a6"/><rect x="25.5" y="4" width="3" height="22" fill="#e6e6e6"/><path d="M21 7 L27 0 L33 7 Z M21 23 L27 30 L33 23 Z" fill="#e6e6e6"/></svg>
<div class="a" style="left:401.0px;top:1123.0px;font-size:22.5px;line-height:36.0px;color:#e6e6e6;white-space:nowrap;">Auto</div>
<div class="a" style="left:19.0px;top:1186.0px;font-size:22.5px;line-height:36.0px;color:#d9d9d9;white-space:nowrap;">Fit</div>
<div class="a" style="left:123.5px;top:1181.0px;width:295.5px;height:46.0px;background:#5e5e5e;border-radius:3px"></div>
<div class="a" style="left:141.0px;top:1186.0px;font-size:22.5px;line-height:36.0px;color:#e6e6e6;white-space:nowrap;">Fill</div>
<svg class="a" style="left:392.0px;top:1195.0px" width="12" height="18" viewBox="0 0 12 18"><path d="M0 7 L6 0 L12 7 Z M0 11 L6 18 L12 11 Z" fill="#e6e6e6"/></svg>
<div class="a" style="left:435.5px;top:1201.5px;width:4.6px;height:4.6px;background:#b3b3b3;border-radius:50%"></div>
<div class="a" style="left:444.0px;top:1201.5px;width:4.6px;height:4.6px;background:#b3b3b3;border-radius:50%"></div>
<div class="a" style="left:452.5px;top:1201.5px;width:4.6px;height:4.6px;background:#b3b3b3;border-radius:50%"></div>
<div class="a" style="left:2.0px;top:1244.0px;width:480.0px;height:58.0px;background:#2b2b2b;border-top:2px solid #262626"></div>
<svg class="a" style="left:19.0px;top:1269.0px" width="15" height="9" viewBox="0 0 15 9"><path d="M0 0 H15 L7.5 8.5 Z" fill="#e6e6e6"/></svg>
<div class="a" style="left:50.0px;top:1254.8px;font-size:24px;line-height:38.4px;color:#ebebeb;white-space:nowrap;font-weight:bold">Position</div>
<div class="a" style="left:19.0px;top:1324.0px;font-size:22.5px;line-height:36.0px;color:#d9d9d9;white-space:nowrap;">Position</div>
<div class="a" style="left:123.0px;top:1319.0px;width:342.0px;height:46.0px;background:#5e5e5e;border-radius:3px"></div>
<svg class="a" style="left:144.0px;top:1330.0px" width="24" height="24" viewBox="0 0 24 24"><path d="M2 2 L22 22 M22 2 L2 22" stroke="#e6e6e6" stroke-width="3.6"/></svg>
<div class="a" style="left:189.0px;top:1324.0px;font-size:22.5px;line-height:36.0px;color:#e6e6e6;white-space:nowrap;">Static</div>
<svg class="a" style="left:436.0px;top:1333.0px" width="12" height="18" viewBox="0 0 12 18"><path d="M0 7 L6 0 L12 7 Z M0 11 L6 18 L12 11 Z" fill="#e6e6e6"/></svg>
<div class="a" style="left:18.0px;top:1382.0px;width:447.5px;height:40.5px;background:#4a4a4a;border-radius:3px"></div>
<svg class="a" style="left:150.0px;top:1393.0px" width="9" height="16" viewBox="0 0 9 16"><path d="M0 0 L8.5 8 L0 16 Z" fill="#e6e6e6"/></svg>
<div class="a" style="left:179.0px;top:1384.0px;font-size:22.5px;line-height:36.0px;color:#e0e0e0;white-space:nowrap;">Float and clear</div>
<div class="a" style="left:2.0px;top:1439.0px;width:480.0px;height:57.0px;background:#2b2b2b;border-top:2px solid #262626"></div>
<svg class="a" style="left:19.0px;top:1463.5px" width="15" height="9" viewBox="0 0 15 9"><path d="M0 0 H15 L7.5 8.5 Z" fill="#e6e6e6"/></svg>
<div class="a" style="left:50.0px;top:1449.3px;font-size:24px;line-height:38.4px;color:#ebebeb;white-space:nowrap;font-weight:bold">Typography</div>
<div class="a" style="left:14.0px;top:1520.0px;width:52.0px;height:32.0px;background:#5b4534;border-radius:3px"></div>
<div class="a" style="left:20.0px;top:1518.0px;font-size:22.5px;line-height:36.0px;color:#f3a35f;white-space:nowrap;">Font</div>
<div class="a" style="left:123.0px;top:1514.0px;width:342.0px;height:45.0px;background:#5e5e5e;border-radius:3px"></div>
<div class="a" style="left:140.0px;top:1518.5px;font-size:22.5px;line-height:36.0px;color:#e6e6e6;white-space:nowrap;">Montserrat</div>
<svg class="a" style="left:436.0px;top:1528.0px" width="12" height="18" viewBox="0 0 12 18"><path d="M0 7 L6 0 L12 7 Z M0 11 L6 18 L12 11 Z" fill="#e6e6e6"/></svg>
<div class="a" style="left:14.0px;top:1584.0px;width:78.0px;height:32.0px;background:#5b4534;border-radius:3px"></div>
<div class="a" style="left:20.0px;top:1582.0px;font-size:22.5px;line-height:36.0px;color:#f3a35f;white-space:nowrap;">Weight</div>
<div class="a" style="left:123.0px;top:1578.0px;width:342.0px;height:45.0px;background:#5e5e5e;border-radius:3px"></div>
<div class="a" style="left:140.0px;top:1582.5px;font-size:22.5px;line-height:36.0px;color:#e6e6e6;white-space:nowrap;">400 - Normal</div>
<svg class="a" style="left:436.0px;top:1592.0px" width="12" height="18" viewBox="0 0 12 18"><path d="M0 7 L6 0 L12 7 Z M0 11 L6 18 L12 11 Z" fill="#e6e6e6"/></svg>
<div class="a" style="left:14.0px;top:1648.0px;width:50.0px;height:32.0px;background:#5b4534;border-radius:3px"></div>
<div class="a" style="left:20.0px;top:1646.0px;font-size:22.5px;line-height:36.0px;color:#f3a35f;white-space:nowrap;">Size</div>
<div class="a" style="left:122.0px;top:1640.0px;width:112.0px;height:47.0px;background:#2b2b2b;border-radius:3px"></div>
<div class="a" style="left:132.0px;top:1646.0px;font-size:22.5px;line-height:36.0px;color:#e6e6e6;white-space:nowrap;">16</div>
<div class="a" style="left:203.0px;top:1649.6px;font-size:18px;line-height:28.8px;color:#8c8c8c;white-space:nowrap;">PX</div>
<div class="a" style="left:246.0px;top:1648.0px;width:74.0px;height:32.0px;background:#5b4534;border-radius:3px"></div>
<div class="a" style="left:252.0px;top:1646.0px;font-size:22.5px;line-height:36.0px;color:#f3a35f;white-space:nowrap;">Height</div>
<div class="a" style="left:354.0px;top:1640.0px;width:111.5px;height:47.0px;background:#2b2b2b;border-radius:3px"></div>
<div class="a" style="left:365.0px;top:1646.0px;font-size:22.5px;line-height:36.0px;color:#e6e6e6;white-space:nowrap;">28</div>
<div class="a" style="left:435.0px;top:1649.6px;font-size:18px;line-height:28.8px;color:#8c8c8c;white-space:nowrap;">PX</div>
<div class="a" style="left:14.0px;top:1712.0px;width:60.0px;height:32.0px;background:#5b4534;border-radius:3px"></div>
<div class="a" style="left:20.0px;top:1710.0px;font-size:22.5px;line-height:36.0px;color:#f3a35f;white-space:nowrap;">Color</div>
<div class="a" style="left:122.0px;top:1704.0px;width:343.0px;height:47.5px;background:#262626;border-radius:3px"></div>
<div class="a" style="left:123.0px;top:1705.0px;width:45.0px;height:45.5px;background:#1a1b1f;border-radius:3px 0 0 3px"></div>
<div class="a" style="left:179.0px;top:1710.0px;font-size:22.5px;line-height:36.0px;color:#e6e6e6;white-space:nowrap;">#1a1b1f</div>
<div class="a" style="left:19.0px;top:1774.0px;font-size:22.5px;line-height:36.0px;color:#d9d9d9;white-space:nowrap;">Align</div>
<div class="a" style="left:122.5px;top:1768.0px;width:342.0px;height:47.0px;background:#5c5c5c;border-radius:3px;box-shadow:inset 0 0 0 1.5px #2e2e2e"></div>
<div class="a" style="left:122.5px;top:1768.0px;width:86.5px;height:47.0px;background:#2b2b2b;border-radius:3px 0 0 3px"></div>
<div class="a" style="left:293.0px;top:1768.0px;width:2.0px;height:47.0px;background:#404040"></div>
<div class="a" style="left:380.0px;top:1768.0px;width:2.0px;height:47.0px;background:#404040"></div>
<svg class="a" style="left:153.0px;top:1780.0px" width="24" height="22" viewBox="0 0 24 22"><rect x="0" y="0" width="24" height="3.8" fill="#e6e6e6"/><rect x="0" y="6" width="16" height="3.8" fill="#e6e6e6"/><rect x="0" y="12" width="24" height="3.8" fill="#e6e6e6"/><rect x="0" y="18" width="16" height="3.8" fill="#e6e6e6"/></svg>
<svg class="a" style="left:239.0px;top:1780.0px" width="24" height="22" viewBox="0 0 24 22"><rect x="0.0" y="0" width="24" height="3.8" fill="#e6e6e6"/><rect x="4.0" y="6" width="16" height="3.8" fill="#e6e6e6"/><rect x="0.0" y="12" width="24" height="3.8" fill="#e6e6e6"/><rect x="4.0" y="18" width="16" height="3.8" fill="#e6e6e6"/></svg>
<svg class="a" style="left:325.0px;top:1780.0px" width="24" height="22" viewBox="0 0 24 22"><rect x="0" y="0" width="24" height="3.8" fill="#e6e6e6"/><rect x="8" y="6" width="16" height="3.8" fill="#e6e6e6"/><rect x="0" y="12" width="24" height="3.8" fill="#e6e6e6"/><rect x="8" y="18" width="16" height="3.8" fill="#e6e6e6"/></svg>
<svg class="a" style="left:411.0px;top:1780.0px" width="24" height="22" viewBox="0 0 24 22"><rect x="0" y="0" width="24" height="3.8" fill="#e6e6e6"/><rect x="0" y="6" width="24" height="3.8" fill="#e6e6e6"/><rect x="0" y="12" width="24" height="3.8" fill="#e6e6e6"/><rect x="0" y="18" width="24" height="3.8" fill="#e6e6e6"/></svg>
<div class="a" style="left:19.0px;top:1837.0px;font-size:22.5px;line-height:36.0px;color:#d9d9d9;white-space:nowrap;">Style</div>
<div class="a" style="left:122.5px;top:1832.0px;width:110.0px;height:40.0px;background:#5c5c5c;border-radius:3px"></div>
<div class="a" style="left:122.5px;top:1832.0px;width:56.0px;height:40.0px;background:#2b2b2b;border-radius:3px 0 0 3px"></div>
<div class="a" style="left:250.0px;top:1832.0px;width:214.5px;height:40.0px;background:#5c5c5c;border-radius:3px"></div>
<div class="a" style="left:250.0px;top:1832.0px;width:55.0px;height:40.0px;background:#2b2b2b;border-radius:3px 0 0 3px"></div>
<div class="a" style="left:357.0px;top:1832.0px;width:2.0px;height:40.0px;background:#404040"></div>
<div class="a" style="left:412.0px;top:1832.0px;width:2.0px;height:40.0px;background:#404040"></div>
<div class="a" style="left:145.0px;top:1846.0px;width:12.0px;height:10.0px;background:#e6e6e6"></div>
<div class="a" style="left:202.0px;top:1846.0px;width:12.0px;height:10.0px;background:#e6e6e6"></div>
<svg class="a" style="left:265.0px;top:1843.0px" width="24" height="10" viewBox="0 0 24 10"><path d="M2 1 L12 9 L22 1" stroke="#e6e6e6" stroke-width="3" fill="none"/></svg>
<div class="a" style="left:322.0px;top:1846.0px;width:20.0px;height:10.0px;background:#e6e6e6"></div>
<div class="a" style="left:376.0px;top:1846.0px;width:20.0px;height:10.0px;background:#e6e6e6"></div>
<div class="a" style="left:426.0px;top:1842.0px;width:28.0px;height:2.5px;background:#e6e6e6"></div>
<div class="a" style="left:434.0px;top:1846.0px;width:12.0px;height:10.0px;background:#e6e6e6"></div>
</div>
<div class="a" style="left:2570px;top:254px;width:492px;height:184px;border:20px solid #ff0000"></div>
</body></html>
